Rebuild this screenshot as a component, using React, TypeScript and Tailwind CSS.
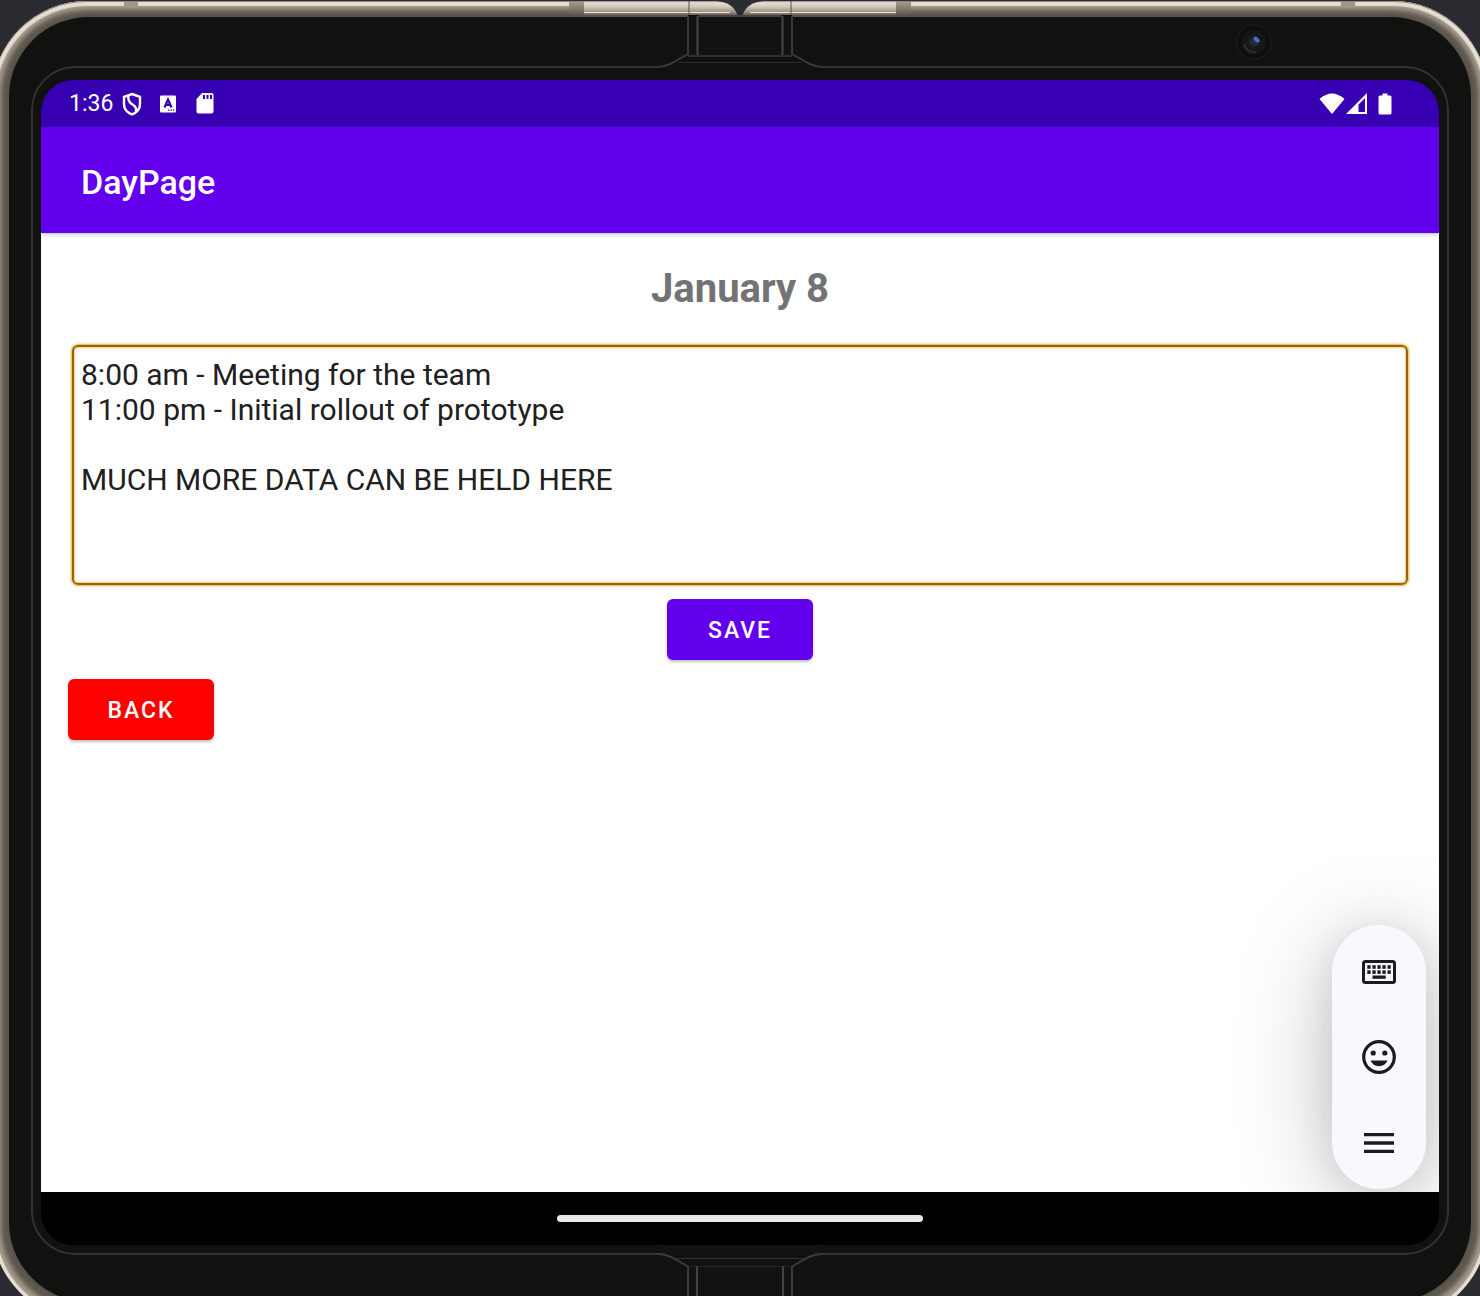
import React from "react";

const NOTES = `8:00 am - Meeting for the team
11:00 pm - Initial rollout of prototype

MUCH MORE DATA CAN BE HELD HERE`;

function HingeTop() {
  return (
    <svg
      aria-hidden="true"
      width="360"
      height="80"
      viewBox="0 0 360 80"
      className="pointer-events-none absolute top-0 left-1/2 -translate-x-1/2"
    >
      <defs>
        <linearGradient id="cap" x1="0" y1="0" x2="0" y2="1">
          <stop offset="0" stopColor="#8f877c" />
          <stop offset="0.12" stopColor="#e6ddd4" />
          <stop offset="0.4" stopColor="#d3c9bc" />
          <stop offset="0.75" stopColor="#a09685" />
          <stop offset="1" stopColor="#6b6254" />
        </linearGradient>
        <linearGradient id="notch" x1="0" y1="0" x2="0" y2="1">
          <stop offset="0" stopColor="#a59c91" />
          <stop offset="1" stopColor="#665d50" />
        </linearGradient>
      </defs>
      <rect x="100" y="17" width="160" height="60" fill="#111110" />
      <rect x="128" y="15" width="104" height="60" fill="#111110" />
      <rect x="120" y="0" width="120" height="15" fill="#2b2c31" />
      <rect x="9" y="2" width="15" height="12" fill="url(#notch)" />
      <rect x="336" y="2" width="15" height="12" fill="url(#notch)" />
      <path d="M24 1H156Q172 2 177 14V15H24Z" fill="url(#cap)" />
      <path d="M336 1H204Q188 2 183 14V15H336Z" fill="url(#cap)" />
      <path d="M24 12.5H170M190 12.5H336" stroke="#ede4d8" strokeWidth="1" />
      <path d="M129 1V15M231 1V15" stroke="#5c5449" strokeWidth="1" />
      <path d="M139 16H221" stroke="#77777b" strokeWidth="1" />
      <path d="M98 67Q104 67 110 64L128 54V16M262 67Q256 67 250 64L232 54V16" fill="none" stroke="#3a3a3a" strokeWidth="2" />
      <path d="M137.500 16V55M222.500 16V55" stroke="#41464a" strokeWidth="2" />
      <path d="M128 56H232" stroke="#2e2e2e" strokeWidth="2" />
      <path d="M118 62.500H242" stroke="#2c2c2c" strokeWidth="1" />
    </svg>
  );
}

function HingeBottom() {
  return (
    <svg
      aria-hidden="true"
      width="360"
      height="50"
      viewBox="0 0 360 50"
      className="pointer-events-none absolute bottom-0 left-1/2 -translate-x-1/2"
    >
      <rect x="100" y="0" width="160" height="50" fill="#121211" />
      <path d="M97 8Q105 8 111 11L128 20.500V50M263 8Q255 8 249 11L232 20.500V50" fill="none" stroke="#3c3c3e" strokeWidth="2" />
      <path d="M115 12.500H245" stroke="#333" strokeWidth="1" />
      <path d="M132 20.500H228" stroke="#262626" strokeWidth="1" />
      <path d="M137 20V50M223 20V50" stroke="#434446" strokeWidth="2" />
    </svg>
  );
}

function Camera() {
  return (
    <svg
      aria-hidden="true"
      width="36"
      height="36"
      viewBox="0 0 36 36"
      className="absolute top-6 right-[208px]"
    >
      <defs>
        <radialGradient id="lens">
          <stop offset="0" stopColor="#23383f" />
          <stop offset="0.6" stopColor="#18242a" />
          <stop offset="1" stopColor="#141414" />
        </radialGradient>
      </defs>
      <circle cx="18" cy="18" r="17.300" fill="#0e0e0e" stroke="#252525" strokeWidth="0.8" />
      <circle cx="18" cy="18" r="12" fill="#161616" />
      <path d="M8 20A10 10 0 0 0 20 28" fill="none" stroke="#292929" strokeWidth="2.500" />
      <circle cx="18" cy="18" r="7.500" fill="url(#lens)" />
      <ellipse cx="20.500" cy="15.500" rx="3.500" ry="2.200" transform="rotate(45 20.500 15.500)" fill="#4f6fb5" />
    </svg>
  );
}

function StatusBar() {
  return (
    <header className="flex h-[47px] shrink-0 items-center justify-between bg-[#3700b3] pr-[47px] pl-7 text-white">
      <div className="flex items-center">
        <time className="w-[53px] text-[23px] leading-[28px]">1:36</time>
        <svg aria-hidden="true" width="20" height="24" viewBox="0 0 20 24" fill="none" stroke="white" strokeWidth="2.400">
          <path d="M10 2L18 4.800V12C18 17 14.500 20.700 10 22.300C5.500 20.700 2 17 2 12V4.800Z" />
          <path d="M6.500 3.500C5.500 8 7 10.500 10.500 12.500C14 14.500 15 16.500 13.800 20" />
        </svg>
        <svg aria-hidden="true" width="16" height="18" viewBox="0 0 16 18" className="ml-[18px]">
          <rect y=".5" width="16" height="17" rx="1" fill="white" />
          <path d="M4.500 12.500L8 4.500L11.500 12.500M6 9.800H10" fill="none" stroke="#3700b3" strokeWidth="2.200" />
          <path d="M8 15.200H14.500" stroke="#3700b3" strokeWidth="1.200" strokeDasharray="1.400 1" />
        </svg>
        <svg aria-hidden="true" width="18" height="21" viewBox="0 0 18 21" className="ml-5">
          <path d="M6 0H15.500Q17.500 0 17.500 2V18.500Q17.500 20.500 15.500 20.500H2.500Q.5 20.500 .5 18.500V6Z" fill="white" />
          <path d="M8 2V6M11.500 2V6M15 2V6" stroke="#3700b3" strokeWidth="2" />
        </svg>
      </div>
      <div className="flex items-center">
        <svg aria-hidden="true" width="26" height="22" viewBox="0 0 26 22">
          <path d="M.5 6Q13-5 25.500 6L13 21Z" fill="white" />
        </svg>
        <svg aria-hidden="true" width="22" height="22" viewBox="0 0 22 22" className="ml-px">
          <path fillRule="evenodd" d="M21 0V21H0ZM19 5L12.500 11.500V19H19Z" fill="white" />
        </svg>
        <svg aria-hidden="true" width="14" height="22" viewBox="0 0 14 22" className="ml-[10px]">
          <path d="M4.500 .5H9.500V2.500H12Q13.500 2.500 13.500 4V20Q13.500 21.500 12 21.500H2Q.5 21.500 .5 20V4Q.5 2.500 2 2.500H4.500Z" fill="white" />
        </svg>
      </div>
    </header>
  );
}

function KeyboardIcon() {
  return (
    <svg aria-hidden="true" width="34" height="24" viewBox="0 0 34 24" fill="#1b1b21">
      <rect x="1.500" y="1.500" width="31" height="21" rx="2" fill="none" stroke="#1b1b21" strokeWidth="3" />
      {[5.3, 10.4, 15.4, 20.4, 25.5].map((x) => (
        <React.Fragment key={x}>
          <rect x={x} y="5.200" width="3.300" height="3.600" />
          <rect x={x} y="10.300" width="3.300" height="3.600" />
        </React.Fragment>
      ))}
      <rect x="10.500" y="15.500" width="13.200" height="3.300" />
    </svg>
  );
}

function SmileIcon() {
  return (
    <svg aria-hidden="true" width="34" height="34" viewBox="0 0 34 34" fill="#1b1b21">
      <circle cx="17" cy="17" r="15.300" fill="none" stroke="#1b1b21" strokeWidth="3.200" />
      <circle cx="11.200" cy="13" r="2.600" />
      <circle cx="22.800" cy="13" r="2.600" />
      <path d="M8.500 20.500H25.500C24 24 21 26.200 17 26.200S10 24 8.500 20.500Z" />
    </svg>
  );
}

function MenuIcon() {
  return (
    <svg aria-hidden="true" width="30" height="20" viewBox="0 0 30 20">
      <path d="M0 1.700H30M0 10H30M0 18.300H30" stroke="#1b1b21" strokeWidth="3.300" />
    </svg>
  );
}

function InputToolbar() {
  return (
    <div
      role="toolbar"
      aria-label="Input tools"
      className="absolute right-[13px] bottom-[3px] flex w-[94px] flex-col rounded-full bg-[#f9f8ff] py-1 shadow-[0_14px_100px_rgba(0,0,0,0.24),0_4px_40px_rgba(0,0,0,0.1)]"
    >
      <button type="button" aria-label="Keyboard" className="flex h-[85px] items-center justify-center">
        <KeyboardIcon />
      </button>
      <button type="button" aria-label="Emoji" className="flex h-[86px] items-center justify-center">
        <SmileIcon />
      </button>
      <button type="button" aria-label="Menu" className="flex h-[85px] items-center justify-center">
        <MenuIcon />
      </button>
    </div>
  );
}

function DayPage() {
  return (
    <main className="relative flex flex-1 flex-col overflow-hidden bg-white">
      <div className="h-[106px] shrink-0 bg-[#6200ee] shadow-[0_1px_4px_rgba(0,0,0,0.3)]">
        <h1 className="flex h-full items-center pt-1 pl-10 text-[34px] font-medium text-white">DayPage</h1>
      </div>
      <div className="flex flex-col items-center px-[31px] pt-8">
        <h2 className="text-[40px] leading-[48px] font-bold text-[#737373]">
          <label htmlFor="notes">January 8</label>
        </h2>
        <textarea
          id="notes"
          defaultValue={NOTES}
          spellCheck={false}
          className="mt-8 h-[240px] w-full resize-none rounded-[6px] border-2 border-[#94630f] px-[7px] py-[10px] text-[30px] leading-[35px] text-[#202020] shadow-[0_0_2px_1px_#f2ae2c,inset_0_0_2px_1px_#f7cb78] outline-none"
        />
        <button
          type="button"
          className="mt-[14px] h-[61px] w-[146px] rounded-[6px] bg-[#6200ee] pt-1 text-[23px] font-medium tracking-[2px] text-white shadow-[0_2px_3px_rgba(0,0,0,0.25)]"
        >
          SAVE
        </button>
        <button
          type="button"
          className="-ml-1 mt-[19px] h-[61px] w-[146px] self-start rounded-[6px] bg-[#ff0000] pt-1 text-[23px] font-medium tracking-[2px] text-white shadow-[0_2px_3px_rgba(0,0,0,0.25)]"
        >
          BACK
        </button>
      </div>
      <InputToolbar />
    </main>
  );
}

export default function App() {
  return (
    <div className="relative flex h-screen flex-col overflow-hidden bg-[#2b2c31] font-['Roboto',sans-serif]">
      <div className="-mx-2 mt-px -mb-6 flex flex-1 flex-col rounded-[95px] bg-[#5f584d] px-[15px] pt-[14px] pb-4 shadow-[inset_0_1px_0_#8f877c,inset_0_1px_1px_4px_#e6ddd4,inset_0_0_4px_9px_#a1988a]">
        <div className="flex flex-1 flex-col rounded-[82px] border-2 border-[#55534f] bg-[#111110] px-[22px] pt-[49px] pb-[47px]">
          <div className="flex flex-1 flex-col rounded-[44px] border-2 border-[#323233] px-2 pt-3 pb-2">
            <div className="flex flex-1 flex-col overflow-hidden rounded-[32px] bg-black">
              <StatusBar />
              <DayPage />
              <footer className="flex h-[53px] shrink-0 items-center justify-center bg-black">
                <div className="h-[7px] w-[366px] rounded-full bg-[#e8e8e8]" />
              </footer>
            </div>
          </div>
        </div>
      </div>
      <span aria-hidden="true" className="absolute top-[2px] left-[124px] h-1 w-[14px] bg-[#a0978c]" />
      <span aria-hidden="true" className="absolute top-[2px] right-[125px] h-1 w-[14px] bg-[#a0978c]" />
      <HingeTop />
      <HingeBottom />
      <Camera />
    </div>
  );
}
